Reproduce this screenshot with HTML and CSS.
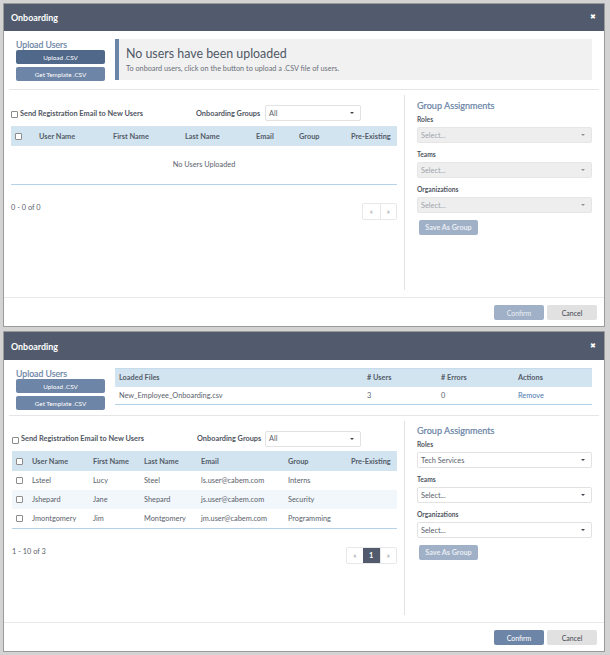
FILE: index.html
```html
<!DOCTYPE html>
<html lang="en">
<head>
<meta charset="utf-8">
<title>Onboarding</title>
<link rel="stylesheet" href="styles.css">
</head>
<body>
<section class="modal modal-empty">
  <header class="modal-head"><h1>Onboarding</h1><span class="close">&#10006;</span></header>
  <div class="top">
    <div class="upload">
      <h2>Upload Users</h2>
      <button class="btn btn-dark">Upload .CSV</button>
      <button class="btn">Get Template .CSV</button>
    </div>
    <div class="alert">
      <h3>No users have been uploaded</h3>
      <p>To onboard users, click on the button to upload a .CSV file of users.</p>
    </div>
  </div>
  <div class="main">
    <div class="left">
      <div class="opts">
        <label class="send"><input type="checkbox" class="cb cb-low"><span>Send Registration Email to New Users</span></label>
        <span class="grp-label">Onboarding Groups</span>
        <div class="select sel-all"><span>All</span><i class="caret"></i></div>
      </div>
      <table class="grid grid-a">
        <thead><tr><th><input type="checkbox" class="cb"></th><th>User Name</th><th>First Name</th><th>Last Name</th><th>Email</th><th>Group</th><th>Pre-Existing</th></tr></thead>
        <tbody><tr class="none"><td colspan="7">No Users Uploaded</td></tr></tbody>
      </table>
      <div class="pager-row">
        <span>0 - 0 of 0</span>
        <div class="pager"><span>&laquo;</span><span>&raquo;</span></div>
      </div>
    </div>
    <aside class="right">
      <h2>Group Assignments</h2>
      <label>Roles</label>
      <div class="select off"><span>Select...</span><i class="caret"></i></div>
      <label>Teams</label>
      <div class="select off"><span>Select...</span><i class="caret"></i></div>
      <label>Organizations</label>
      <div class="select off"><span>Select...</span><i class="caret"></i></div>
      <button class="btn btn-off btn-save">Save As Group</button>
    </aside>
  </div>
  <footer class="foot"><button class="btn btn-off btn-foot">Confirm</button><button class="btn btn-cancel btn-foot">Cancel</button></footer>
</section>

<section class="modal modal-loaded">
  <header class="modal-head"><h1>Onboarding</h1><span class="close">&#10006;</span></header>
  <div class="top">
    <div class="upload">
      <h2>Upload Users</h2>
      <button class="btn">Upload .CSV</button>
      <button class="btn">Get Template .CSV</button>
    </div>
    <table class="files">
      <thead><tr><th>Loaded Files</th><th># Users</th><th># Errors</th><th>Actions</th></tr></thead>
      <tbody><tr><td>New_Employee_Onboarding.csv</td><td>3</td><td>0</td><td><a href="#">Remove</a></td></tr></tbody>
    </table>
  </div>
  <div class="main">
    <div class="left">
      <div class="opts">
        <label class="send"><input type="checkbox" class="cb cb-low"><span>Send Registration Email to New Users</span></label>
        <span class="grp-label">Onboarding Groups</span>
        <div class="select sel-all"><span>All</span><i class="caret"></i></div>
      </div>
      <table class="grid grid-b">
        <thead><tr><th><input type="checkbox" class="cb"></th><th>User Name</th><th>First Name</th><th>Last Name</th><th>Email</th><th>Group</th><th>Pre-Existing</th></tr></thead>
        <tbody>
          <tr><td><input type="checkbox" class="cb"></td><td>Lsteel</td><td>Lucy</td><td>Steel</td><td>ls.user@cabem.com</td><td>Interns</td><td></td></tr>
          <tr class="alt"><td><input type="checkbox" class="cb"></td><td>Jshepard</td><td>Jane</td><td>Shepard</td><td>js.user@cabem.com</td><td>Security</td><td></td></tr>
          <tr><td><input type="checkbox" class="cb"></td><td>Jmontgomery</td><td>Jim</td><td>Montgomery</td><td>jm.user@cabem.com</td><td>Programming</td><td></td></tr>
        </tbody>
      </table>
      <div class="pager-row">
        <span>1 - 10 of 3</span>
        <div class="pager"><span>&laquo;</span><span class="cur">1</span><span>&raquo;</span></div>
      </div>
    </div>
    <aside class="right">
      <h2>Group Assignments</h2>
      <label>Roles</label>
      <div class="select"><span>Tech Services</span><i class="caret"></i></div>
      <label>Teams</label>
      <div class="select"><span>Select...</span><i class="caret"></i></div>
      <label>Organizations</label>
      <div class="select"><span>Select...</span><i class="caret"></i></div>
      <button class="btn btn-off btn-save">Save As Group</button>
    </aside>
  </div>
  <footer class="foot"><button class="btn btn-foot">Confirm</button><button class="btn btn-cancel btn-foot">Cancel</button></footer>
</section>
</body>
</html>
```
FILE: styles.css
```css
* { box-sizing: border-box; }
html, body { margin: 0; height: 100%; }
body {
  width: 610px;
  height: 655px;
  overflow: hidden;
  padding: 4px 6px 0 4px;
  background: #d3d3d3;
  font-family: "Lato", "Liberation Sans", sans-serif;
  font-size: 7.35px;
  color: #5a616c;
}
.modal {
  display: flex;
  flex-direction: column;
  width: 600px;
  background: #fff;
  box-shadow: 0 0 0 1px #9a9a9a;
}
.modal-empty { height: 322px; }
.modal-loaded { height: 319px; margin-top: 6px; }

.modal-head {
  display: flex;
  align-items: center;
  justify-content: space-between;
  height: 27px;
  padding: 0 8px 0 7px;
  background: #525b6d;
  color: #fff;
  flex: none;
}
.modal-loaded .modal-head { height: 28px; }
.modal-head h1 { margin: 0; font-size: 8.9px; font-weight: 700; }
.close { font-size: 6.5px; line-height: 1; }

.top {
  display: flex;
  gap: 10px;
  height: 59px;
  margin: 0 5px;
  padding: 8px 7px 0;
  border-bottom: 1px solid #e6e6e6;
  flex: none;
}
.modal-loaded .top { height: 56px; }
.upload { width: 89px; flex: none; }
h2 {
  margin: 0;
  font-size: 9.1px;
  line-height: 11px;
  font-weight: 400;
  color: #6a84a6;
  -webkit-text-stroke: 0.2px #6a84a6;
}
.upload h2 { height: 11px; font-size: 8.7px; }
.btn {
  display: block;
  border: 0;
  border-radius: 2px;
  padding: 0;
  background: #6d85a6;
  color: #fff;
  font: 400 6.3px "Lato", "Liberation Sans", sans-serif;
}
.upload .btn { width: 89px; height: 14px; margin-bottom: 3px; }
.btn-dark { background: #50698a; }
.btn-off { background: #a0b1c7; color: #e8edf3; }
.btn-cancel { background: #e1e1e1; color: #3f4650; }

.alert {
  flex: 1;
  height: 41px;
  padding: 7px 0 0 7px;
  background: #f1f1f1;
  border-left: 4px solid #6a85a8;
}
.alert h3 {
  margin: 0;
  font-size: 12.4px;
  line-height: 15px;
  font-weight: 400;
  color: #4f5866;
}
.alert p { margin: 3px 0 0; font-size: 7.3px; line-height: 9px; color: #6a7078; }

.files {
  flex: 1;
  height: 37px;
  border-collapse: collapse;
  table-layout: fixed;
}
.files th { height: 18px; padding: 0 0 0 4px; text-align: left; background: #d2e4f0; font-weight: 700; color: #545c68; border-top: 1px solid #c6dcec; }
.files th:nth-child(1) { width: 248px; }
.files th:nth-child(2) { width: 74px; }
.files th:nth-child(3) { width: 77px; }
.files td { height: 18px; padding: 0 0 0 4px; border-bottom: 1px solid #b4d2e8; }
.files a { color: #4a78b0; text-decoration: none; }

.main {
  display: flex;
  flex: 1;
  min-height: 0;
  margin: 5px 0 7px;
  padding-left: 7px;
}
.left {
  width: 394px;
  padding-right: 7px;
  border-right: 1px solid #e3e3e3;
  flex: none;
}
.modal-loaded .left { padding-left: 1px; }
.opts {
  display: flex;
  align-items: center;
  height: 31px;
  padding-top: 5px;
  font-weight: 700;
  color: #4f5662;
}
.modal-loaded .opts { height: 30px; }
.send { display: flex; align-items: center; width: 185px; flex: none; }
.send span { margin-left: 2px; }
.grp-label { width: 69px; flex: none; }
.modal-loaded .grp-label { width: 68px; }
.cb {
  appearance: none;
  display: block;
  width: 7px;
  height: 7px;
  margin: 0;
  background: #fff;
  border: 1px solid #8c8c8c;
  border-radius: 1px;
}
.cb-low { margin-top: 3px; }

.select {
  display: flex;
  align-items: center;
  justify-content: space-between;
  height: 16px;
  padding: 0 6px 0 3px;
  background: #fff;
  border: 1px solid #e2e2e2;
  border-radius: 2px;
  font-weight: 400;
  color: #5a616c;
}
.sel-all { width: 96px; flex: none; }
.select.off { background: #eeeeee; color: #a0a4aa; border-color: #e6e6e6; }
.caret { width: 0; height: 0; border: 2.5px solid transparent; border-top: 2.5px solid #3f4650; border-bottom: 0; }
.off .caret { border-top-color: #8e9298; }

.grid { width: 100%; border-collapse: collapse; table-layout: fixed; }
.grid th { height: 20px; padding: 0 0 0 4px; text-align: left; background: #d2e4f0; font-weight: 700; color: #545c68; }
.grid td { height: 19px; padding: 0 0 0 4px; white-space: nowrap; }
.grid tbody tr:last-child td { border-bottom: 1px solid #b4d2e8; }
.grid tr.alt td { background: #f1f7fb; }
.grid .none td { height: 38px; padding: 0; text-align: center; }
.grid-a th:nth-child(1) { width: 24px; }
.grid-a th:nth-child(2) { width: 74px; }
.grid-a th:nth-child(3) { width: 72px; }
.grid-a th:nth-child(4) { width: 71px; }
.grid-a th:nth-child(5) { width: 43px; }
.grid-a th:nth-child(6) { width: 52px; }
.grid-b th:nth-child(1) { width: 16px; }
.grid-b th:nth-child(2) { width: 61px; }
.grid-b th:nth-child(3) { width: 51px; }
.grid-b th:nth-child(4) { width: 57px; }
.grid-b th:nth-child(5) { width: 87px; }
.grid-b th:nth-child(6) { width: 63px; }

.pager-row {
  display: flex;
  justify-content: space-between;
  align-items: flex-start;
  margin-top: 18px;
}
.pager-row > span { line-height: 9px; }
.pager {
  display: flex;
  height: 17px;
  border: 1px solid #e8e8e8;
  border-radius: 2px;
  color: #8a8f96;
}
.pager span { display: flex; align-items: center; justify-content: center; width: 16.5px; }
.pager span + span { border-left: 1px solid #e8e8e8; }
.pager .cur { background: #525b6d; color: #fff; font-weight: 700; border: 0; }

.right { flex: 1; padding: 5px 12px 0 12px; }
.modal-loaded .right { padding-top: 4px; }
.right h2 { margin-bottom: 4px; }
.right label { display: block; margin-bottom: 3px; font-weight: 700; line-height: 9px; font-size: 6.7px; color: #4f5662; }
.right .select { margin-bottom: 7px; }
.btn-save { width: 59px; height: 15px; margin-left: 2px; font-size: 7.2px; font-weight: 700; }

.foot {
  display: flex;
  justify-content: flex-end;
  gap: 3px;
  height: 29px;
  padding: 7px 7px 0 0;
  border-top: 1px solid #eaeaea;
  flex: none;
}
.btn-foot { width: 50px; height: 15px; font-size: 7px; }
```
